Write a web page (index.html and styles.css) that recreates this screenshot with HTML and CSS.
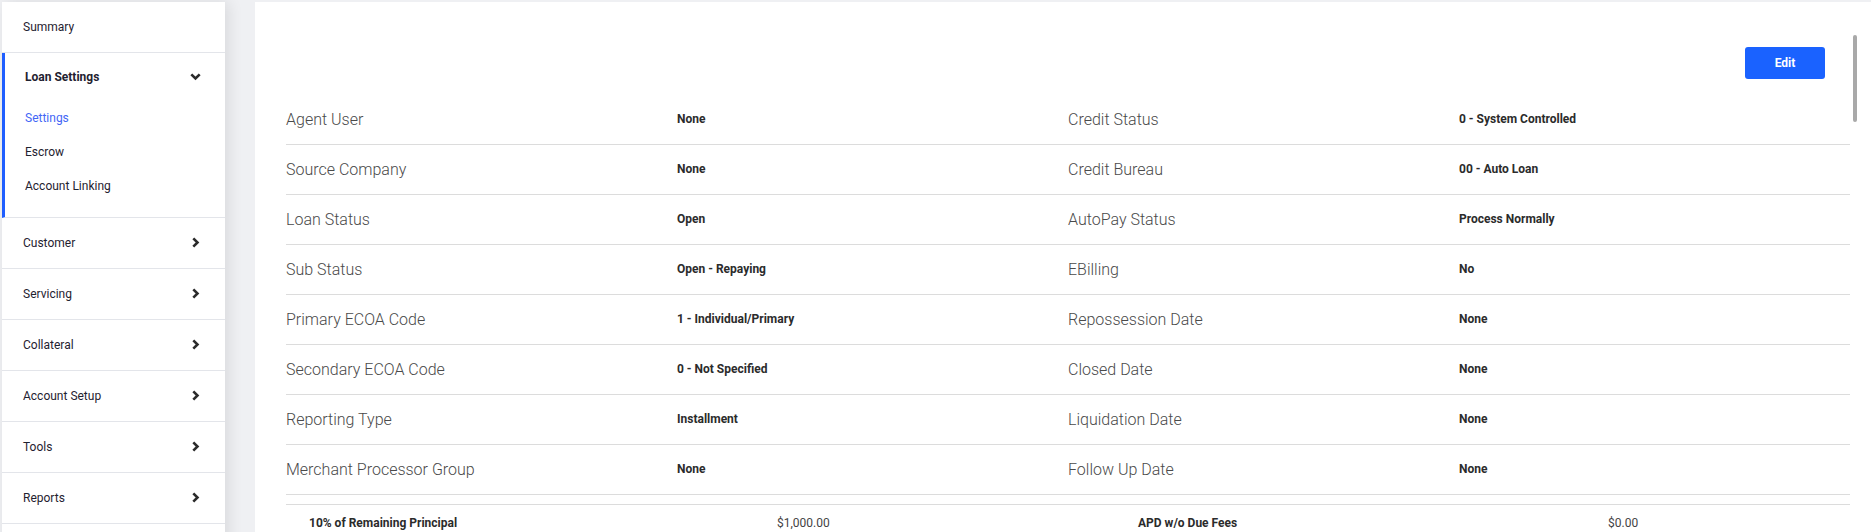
FILE: index.html
```html
<!DOCTYPE html>
<html lang="en">
<head>
<meta charset="utf-8">
<title>Loan Settings</title>
<link rel="stylesheet" href="styles.css">
</head>
<body>
<div class="layout">
  <nav class="sidebar">
    <div class="nav-row"><span>Summary</span></div>
    <div class="nav-group">
      <div class="nav-group-head">
        <span>Loan Settings</span>
        <svg class="chev-down" width="11" height="8" viewBox="0 0 11 8"><path d="M1.3 1.3 L5.5 5.5 L9.7 1.3" fill="none" stroke="#2b2b2b" stroke-width="2.6"/></svg>
      </div>
      <div class="nav-sub active">Settings</div>
      <div class="nav-sub">Escrow</div>
      <div class="nav-sub">Account Linking</div>
    </div>
    <div class="nav-row"><span>Customer</span><svg class="chev" width="8" height="11" viewBox="0 0 8 11"><path d="M1.3 1.3 L5.5 5.5 L1.3 9.7" fill="none" stroke="#2b2b2b" stroke-width="2.6"/></svg></div>
    <div class="nav-row"><span>Servicing</span><svg class="chev" width="8" height="11" viewBox="0 0 8 11"><path d="M1.3 1.3 L5.5 5.5 L1.3 9.7" fill="none" stroke="#2b2b2b" stroke-width="2.6"/></svg></div>
    <div class="nav-row"><span>Collateral</span><svg class="chev" width="8" height="11" viewBox="0 0 8 11"><path d="M1.3 1.3 L5.5 5.5 L1.3 9.7" fill="none" stroke="#2b2b2b" stroke-width="2.6"/></svg></div>
    <div class="nav-row"><span>Account Setup</span><svg class="chev" width="8" height="11" viewBox="0 0 8 11"><path d="M1.3 1.3 L5.5 5.5 L1.3 9.7" fill="none" stroke="#2b2b2b" stroke-width="2.6"/></svg></div>
    <div class="nav-row"><span>Tools</span><svg class="chev" width="8" height="11" viewBox="0 0 8 11"><path d="M1.3 1.3 L5.5 5.5 L1.3 9.7" fill="none" stroke="#2b2b2b" stroke-width="2.6"/></svg></div>
    <div class="nav-row"><span>Reports</span><svg class="chev" width="8" height="11" viewBox="0 0 8 11"><path d="M1.3 1.3 L5.5 5.5 L1.3 9.7" fill="none" stroke="#2b2b2b" stroke-width="2.6"/></svg></div>
    <div class="nav-row nav-empty"></div>
  </nav>

  <main class="card">
    <div class="scrollbar"></div>
    <div class="toolbar">
      <button class="btn-edit">Edit</button>
    </div>

    <div class="info-grid">
      <div class="cell label">Agent User</div><div class="cell value">None</div>
      <div class="cell label">Credit Status</div><div class="cell value">0 - System Controlled</div>

      <div class="cell label">Source Company</div><div class="cell value">None</div>
      <div class="cell label">Credit Bureau</div><div class="cell value">00 - Auto Loan</div>

      <div class="cell label">Loan Status</div><div class="cell value">Open</div>
      <div class="cell label">AutoPay Status</div><div class="cell value">Process Normally</div>

      <div class="cell label">Sub Status</div><div class="cell value">Open - Repaying</div>
      <div class="cell label">EBilling</div><div class="cell value">No</div>

      <div class="cell label">Primary ECOA Code</div><div class="cell value">1 - Individual/Primary</div>
      <div class="cell label">Repossession Date</div><div class="cell value">None</div>

      <div class="cell label">Secondary ECOA Code</div><div class="cell value">0 - Not Specified</div>
      <div class="cell label">Closed Date</div><div class="cell value">None</div>

      <div class="cell label">Reporting Type</div><div class="cell value">Installment</div>
      <div class="cell label">Liquidation Date</div><div class="cell value">None</div>

      <div class="cell label">Merchant Processor Group</div><div class="cell value">None</div>
      <div class="cell label">Follow Up Date</div><div class="cell value">None</div>
    </div>

    <div class="summary-grid">
      <div class="s-cell s-key">10% of Remaining Principal</div>
      <div class="s-cell s-val">$1,000.00</div>
      <div class="s-cell s-key">APD w/o Due Fees</div>
      <div class="s-cell s-val">$0.00</div>
    </div>
  </main>
</div>
</body>
</html>
```

FILE: styles.css
```css
* { box-sizing: border-box; }

html, body {
  margin: 0;
  padding: 0;
  height: 100%;
  overflow: hidden;
}

body {
  background: #eff0f3;
  font-family: Roboto, "Liberation Sans", Arial, sans-serif;
  color: #1f2230;
}

.layout {
  display: flex;
  align-items: flex-start;
  gap: 30px;
  padding: 2px 0 0 2px;
}

/* ---------- Sidebar ---------- */
.sidebar {
  width: 223px;
  flex: none;
  background: #ffffff;
  box-shadow: 4px 0 14px rgba(0, 0, 0, 0.09);
  font-size: 12px;
}

.nav-row {
  height: 51px;
  display: flex;
  align-items: center;
  justify-content: space-between;
  padding: 0 25px 0 21px;
  border-bottom: 1px solid #e3e5ea;
  color: #1f2230;
}

.chev { display: block; margin-top: -2px; }

.nav-group {
  border-left: 3px solid #1f5eff;
  border-bottom: 1px solid #e3e5ea;
  padding-bottom: 14px;
}

.nav-group-head {
  height: 48px;
  display: flex;
  align-items: center;
  justify-content: space-between;
  padding: 0 24px 0 20px;
  font-weight: 700;
  color: #1f2230;
}

.chev-down { display: block; margin-top: -1px; }

.nav-sub {
  height: 34px;
  line-height: 34px;
  padding-left: 20px;
  color: #1f2230;
}

.nav-sub.active { color: #4366f6; }

/* ---------- Main card ---------- */
.card {
  position: relative;
  flex: 1;
  background: #ffffff;
  min-height: 600px;
  padding: 45px 21px 0 31px;
}

.scrollbar {
  position: absolute;
  top: 33px;
  right: 14px;
  width: 4px;
  height: 87px;
  border-radius: 2px;
  background: #a9a9a9;
}

.toolbar {
  display: flex;
  justify-content: flex-end;
  padding-right: 25px;
  margin-bottom: 16px;
}

.btn-edit {
  width: 80px;
  height: 32px;
  border: none;
  border-radius: 3px;
  background: #1a62ff;
  color: #ffffff;
  font-family: Roboto, "Liberation Sans", Arial, sans-serif;
  font-size: 12px;
  font-weight: 700;
  cursor: pointer;
}

.info-grid {
  display: grid;
  grid-template-columns: repeat(4, 1fr);
}

.cell {
  height: 50px;
  display: flex;
  align-items: center;
  border-bottom: 1px solid #dcdcdc;
  padding-bottom: 1px;
}

.label {
  font-size: 16px;
  font-weight: 300;
  color: #4a4a4a;
}

.value {
  font-size: 12px;
  font-weight: 700;
  color: #2b2b2b;
}

.summary-grid {
  margin-top: 9px;
  border-top: 1px solid #dcdcdc;
  display: grid;
  grid-template-columns: 468px 361px 470px 1fr;
}

.s-cell {
  padding: 11px 0 0 23px;
  font-size: 12px;
  line-height: 14px;
  color: #333333;
}

.s-key { font-weight: 700; color: #2b2b2b; }
.s-val { font-weight: 400; color: #444444; }
```
